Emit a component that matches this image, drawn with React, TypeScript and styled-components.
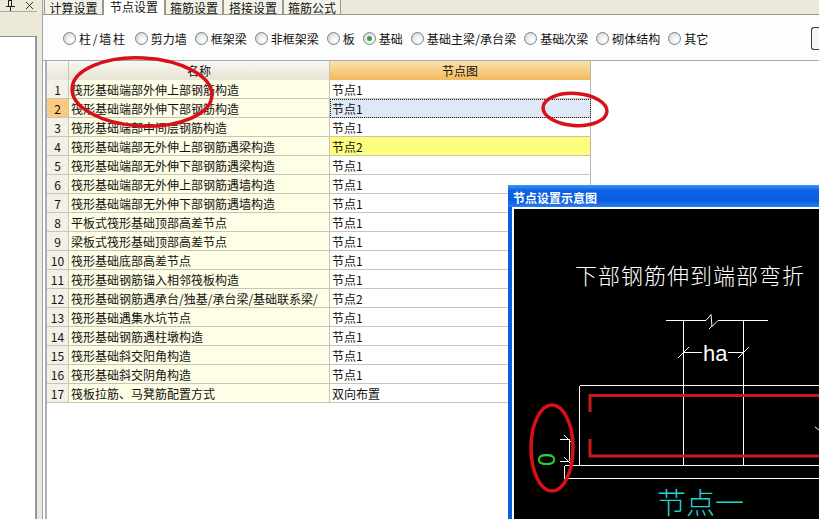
import React from 'react';
import styled, { createGlobalStyle } from 'styled-components';

const GlobalStyle = createGlobalStyle`
  html, body {
    margin: 0;
    padding: 0;
    overflow: hidden;
    background: #fff;
  }
  * {
    box-sizing: border-box;
  }
`;

const Page = styled.div`
  position: relative;
  display: flex;
  width: 819px;
  height: 519px;
  overflow: hidden;
  font-family: "Noto Sans CJK SC", "Liberation Sans", sans-serif;
  font-size: 12px;
  color: #111;
`;

const SidePanel = styled.div`
  display: flex;
  flex-direction: column;
  width: 37px;
  background: #ece9d8;
`;

const PanelHead = styled.div`
  display: flex;
  align-items: center;
  justify-content: space-between;
  height: 12px;
  padding: 0 3px 0 6px;
  border-bottom: 1px solid #aca899;
  overflow: hidden;
`;

const PanelStrip = styled.div`
  height: 25px;
  border-bottom: 1px solid #8f8f88;
`;

const PanelBody = styled.div`
  flex: 1;
  background: #fff;
  border-right: 2px solid #8d96ab;
`;

const Gutter = styled.div`
  width: 5px;
  background: #ece9d8;
`;

const Main = styled.div`
  flex: 1;
  display: flex;
  flex-direction: column;
  min-width: 0;
  background: #fff;
  border-left: 1px solid #9ea5b5;
`;

const TabBar = styled.div`
  display: flex;
  height: 15px;
  padding-left: 1px;
  background: #ece9d8;
  border-bottom: 1px solid #98978c;
`;

const Tab = styled.div<{ $active?: boolean; $width: number }>`
  width: ${p => p.$width}px;
  height: ${p => (p.$active ? 16 : 15)}px;
  padding-top: ${p => (p.$active ? 0 : 1)}px;
  line-height: ${p => (p.$active ? 14 : 13)}px;
  text-align: center;
  background: ${p => (p.$active ? '#fff' : '#f4f3ea')};
  border: 1px solid #98978c;
  border-top: none;
  border-bottom: ${p => (p.$active ? 'none' : '1px solid #98978c')};
`;

const RadioRow = styled.div`
  display: flex;
  align-items: center;
  height: 46px;
  padding: 2px 0 0 20px;
  gap: 8px;
  border-bottom: 1px solid #a3a9b3;
  background: #fdfdfd;
`;

const RadioItem = styled.label<{ $spread?: number }>`
  display: flex;
  align-items: center;
  gap: 3px;
  white-space: nowrap;
  letter-spacing: ${p => p.$spread || 0}px;
`;

const RadioDot = styled.span<{ $checked?: boolean }>`
  position: relative;
  display: block;
  width: 13px;
  height: 13px;
  border-radius: 50%;
  border: 1px solid #6f819b;
  background: radial-gradient(circle at 65% 65%, #fff 0%, #eeeee8 45%, #c9c9c0 100%);

  &::after {
    content: "";
    display: ${p => (p.$checked ? 'block' : 'none')};
    position: absolute;
    left: 3px;
    top: 3px;
    width: 5px;
    height: 5px;
    border-radius: 50%;
    background: #3f9e4a;
  }
`;

const SideButton = styled.div`
  margin-left: auto;
  width: 8px;
  height: 23px;
  margin-top: -1px;
  background: #f5f4ee;
  border: 1px solid #24405f;
  border-right: none;
  border-radius: 3px 0 0 3px;
`;

const GridArea = styled.div`
  flex: 1;
  margin-left: 2px;
  border-left: 2px solid #a9b0bc;
`;

const Grid = styled.div`
  display: grid;
  width: 544px;
  grid-template-columns: 22px 261px 261px;
  grid-auto-rows: 19px;
`;

const CornerCell = styled.div`
  height: 20px;
  background: linear-gradient(#f8f7f1, #e9e6d8);
  border-right: 1px solid #c7c5b5;
  border-bottom: 1px solid #c7c5b5;
`;

const NameHead = styled.div`
  height: 20px;
  line-height: 19px;
  text-align: center;
  background: linear-gradient(#f8f7f1, #e7e4d4);
  border-right: 1px solid #c7c5b5;
  border-bottom: 1px solid #c7c5b5;
`;

const NodeHead = styled.div`
  height: 20px;
  line-height: 19px;
  text-align: center;
  background: linear-gradient(#fbe2ac, #f3b95d);
  border-right: 1px solid #b9b8ac;
  border-bottom: 1px solid #c7c5b5;
`;

const NumCell = styled.div<{ $selected?: boolean }>`
  line-height: 19px;
  text-align: center;
  background: ${p => (p.$selected ? '#fbc97f' : '#f3f1e7')};
  border-right: 1px solid #c7c5b5;
  border-bottom: 1px solid #c7c5b5;
`;

const NameCell = styled.div`
  padding-left: 2px;
  line-height: 19px;
  white-space: nowrap;
  overflow: hidden;
  background: #fefee6;
  border-right: 1px solid #c7c5b5;
  border-bottom: 1px solid #c7c5b5;
`;

const NodeCell = styled.div<{ $tone?: 'focus' | 'warn' }>`
  padding-left: 2px;
  line-height: 19px;
  background: ${p => (p.$tone === 'focus' ? '#dfe8f6' : p.$tone === 'warn' ? '#fdfd7e' : '#fff')};
  border-right: 1px solid #b9b8ac;
  border-bottom: 1px solid #c7c5b5;
  outline: ${p => (p.$tone === 'focus' ? '1px dotted #222' : 'none')};
  outline-offset: -1px;
`;

const Dialog = styled.div`
  position: absolute;
  left: 508px;
  top: 185px;
  width: 320px;
  height: 340px;
  background: #0a5ce0;
  padding: 0 4px;
  border-radius: 3px 3px 0 0;
`;

const DialogTitle = styled.div`
  height: 22px;
  margin: 0 -4px;
  padding: 5px 0 0 5px;
  line-height: 15px;
  font-weight: 700;
  font-size: 12px;
  color: #fff;
  background: linear-gradient(#3d95f7 0%, #0d62e4 25%, #0a5ce0 70%, #2a7df0 100%);
`;

const DialogBody = styled.div`
  height: 318px;
  background: #000;
  border-left: 2px solid #fff;
  border-top: 2px solid #fff;
`;

const Diagram = styled.svg`
  display: block;
`;

const CadTitle = styled.text`
  font-family: "Noto Sans CJK SC", sans-serif;
  font-size: 22px;
  font-weight: 300;
  letter-spacing: 1px;
  fill: #fff;
`;

const CadLabel = styled.text`
  font-family: "Liberation Sans", sans-serif;
  font-size: 22px;
  fill: #fff;
`;

const CadCaption = styled.text`
  font-family: "Noto Sans CJK SC", sans-serif;
  font-size: 29px;
  font-weight: 300;
  fill: #25d0d0;
`;

const CadZero = styled.text`
  font-family: "Liberation Sans", sans-serif;
  font-size: 23px;
  fill: #2fd02f;
`;

const Marks = styled.svg`
  position: absolute;
  left: 0;
  top: 0;
  pointer-events: none;
`;

const tabs = [
  { label: '计算设置', width: 59 },
  { label: '节点设置', width: 62, active: true },
  { label: '箍筋设置', width: 58 },
  { label: '搭接设置', width: 60 },
  { label: '箍筋公式', width: 58 },
];

const radios = [
  { label: '柱/墙柱', spread: 1.75 },
  { label: '剪力墙' },
  { label: '框架梁' },
  { label: '非框架梁' },
  { label: '板' },
  { label: '基础' },
  { label: '基础主梁/承台梁', spread: 0.1 },
  { label: '基础次梁' },
  { label: '砌体结构' },
  { label: '其它' },
];

const rows: [string, string][] = [
  ['筏形基础端部外伸上部钢筋构造', '节点1'],
  ['筏形基础端部外伸下部钢筋构造', '节点1'],
  ['筏形基础端部中间层钢筋构造', '节点1'],
  ['筏形基础端部无外伸上部钢筋遇梁构造', '节点2'],
  ['筏形基础端部无外伸下部钢筋遇梁构造', '节点1'],
  ['筏形基础端部无外伸上部钢筋遇墙构造', '节点1'],
  ['筏形基础端部无外伸下部钢筋遇墙构造', '节点1'],
  ['平板式筏形基础顶部高差节点', '节点1'],
  ['梁板式筏形基础顶部高差节点', '节点1'],
  ['筏形基础底部高差节点', '节点1'],
  ['筏形基础钢筋锚入相邻筏板构造', '节点1'],
  ['筏形基础钢筋遇承台/独基/承台梁/基础联系梁/', '节点2'],
  ['筏形基础遇集水坑节点', '节点1'],
  ['筏形基础钢筋遇柱墩构造', '节点1'],
  ['筏形基础斜交阳角构造', '节点1'],
  ['筏形基础斜交阴角构造', '节点1'],
  ['筏板拉筋、马凳筋配置方式', '双向布置'],
];

const App: React.FC = () => {
  return (
    <Page>
      <GlobalStyle />
      <SidePanel>
        <PanelHead>
          <svg width="9" height="11" viewBox="0 0 9 11" shapeRendering="crispEdges">
            <path d="M2.5 0v6M5.5 0v6M2 .5h4M0 6.5h9M4.5 6.5V11" stroke="#222" fill="none" />
          </svg>
          <svg width="9" height="9" viewBox="0 0 9 9">
            <path d="M1 1l7 7M8 1L1 8" stroke="#333" fill="none" />
          </svg>
        </PanelHead>
        <PanelStrip />
        <PanelBody />
      </SidePanel>
      <Gutter />
      <Main>
        <TabBar>
          {tabs.map(t => (
            <Tab key={t.label} $active={t.active} $width={t.width}>{t.label}</Tab>
          ))}
        </TabBar>
        <RadioRow>
          {radios.map(r => (
            <RadioItem key={r.label} $spread={r.spread}>
              <RadioDot $checked={r.label === '基础'} />
              {r.label}
            </RadioItem>
          ))}
          <SideButton />
        </RadioRow>
        <GridArea>
          <Grid>
            <CornerCell />
            <NameHead>名称</NameHead>
            <NodeHead>节点图</NodeHead>
            {rows.map(([name, node], i) => (
              <React.Fragment key={i}>
                <NumCell $selected={i === 1}>{i + 1}</NumCell>
                <NameCell>{name}</NameCell>
                <NodeCell $tone={i === 1 ? 'focus' : i === 3 ? 'warn' : undefined}>{node}</NodeCell>
              </React.Fragment>
            ))}
          </Grid>
        </GridArea>
      </Main>

      <Dialog>
        <DialogTitle>节点设置示意图</DialogTitle>
        <DialogBody>
          <Diagram width="305" height="310" viewBox="514 209 305 310">
            <CadTitle x="575" y="284">下部钢筋伸到端部弯折</CadTitle>
            <g stroke="#fff" strokeWidth="1" fill="none" shapeRendering="crispEdges">
              <path d="M666 320.5h40M718 320.5h50M683.5 320.5V465M743.5 320.5V465" />
              <path d="M579.5 385.5H819M579.5 385.5V465.5H819M564.5 465.5V478.5H819M564.5 465.5H580" />
            </g>
            <g stroke="#fff" strokeWidth="1" fill="none">
              <path d="M706 320.5l5-6 1 12 6-6M712 326l-3 3" />
              <path d="M684 352.5h18M728 352.5h15M678 358l11-11M738 358l11-11" />
              <path d="M569.5 439v22M560 439.5h9M560 461.5h9M564 435l9 9M564 457l9 9M815 427l4 3" />
            </g>
            <CadLabel x="703" y="361">ha</CadLabel>
            <path d="M590 412V395.5H819M590 439V456H819" stroke="#c81a1a" strokeWidth="3" fill="none" />
            <CadZero transform="translate(555 466) rotate(-90)" x="0" y="0">0</CadZero>
            <CadCaption x="657" y="514">节点一</CadCaption>
          </Diagram>
        </DialogBody>
      </Dialog>

      <Marks width="819" height="519" viewBox="0 0 819 519">
        <g fill="none" stroke="#d9101a" strokeWidth="3.5">
          <ellipse cx="142" cy="92" rx="70" ry="34" transform="rotate(3 142 92)" />
          <ellipse cx="575" cy="109.5" rx="32" ry="16" transform="rotate(4 575 109.5)" />
          <ellipse cx="552" cy="448" rx="21" ry="43" />
        </g>
      </Marks>
    </Page>
  );
};

export default App;
